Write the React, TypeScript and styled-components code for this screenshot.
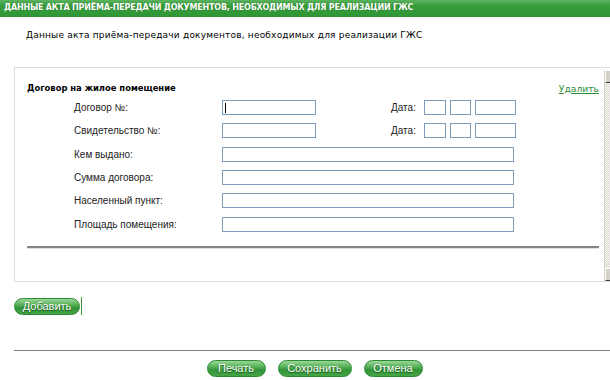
import styled, { createGlobalStyle } from 'styled-components';

const GlobalStyle = createGlobalStyle`
  html, body {
    margin: 0;
    padding: 0;
    background: #ffffff;
    overflow: hidden;
  }
`;

type Field = { label: string; dated?: boolean };

const fields: Field[] = [
  { label: 'Договор №:', dated: true },
  { label: 'Свидетельство №:', dated: true },
  { label: 'Кем выдано:' },
  { label: 'Сумма договора:' },
  { label: 'Населенный пункт:' },
  { label: 'Площадь помещения:' },
];

export const App = () => {
  return (
    <Page>
      <GlobalStyle />
      <TitleBar>Данные акта приёма-передачи документов, необходимых для реализации ГЖС</TitleBar>
      <Subtitle>Данные акта приёма-передачи документов, необходимых для реализации ГЖС</Subtitle>

      <Panel>
        <PanelBody>
          <PanelHead>
            <Heading>Договор на жилое помещение</Heading>
            <DeleteLink href="#">Удалить</DeleteLink>
          </PanelHead>
          <Rows>
            {fields.map((f, i) => (
              <Row key={f.label}>
                <Label>{f.label}</Label>
                {f.dated ? (
                  <DateLine>
                    <TextInput $width={94} $focused={i === 0} />
                    <DateLabel>Дата:</DateLabel>
                    <TextInput $width={22} />
                    <TextInput $width={21} />
                    <TextInput $width={41} />
                  </DateLine>
                ) : (
                  <TextInput $width={292} />
                )}
              </Row>
            ))}
          </Rows>
          <Separator />
        </PanelBody>
        <ScrollTrack>
          <ScrollButton />
          <ScrollFill />
          <ScrollButton />
        </ScrollTrack>
      </Panel>

      <AddRow>
        <GreenButton $width={66}>Добавить</GreenButton>
        <Caret />
      </AddRow>

      <Footer>
        <GreenButton $width={59}>Печать</GreenButton>
        <GreenButton $width={74}>Сохранить</GreenButton>
        <GreenButton $width={59}>Отмена</GreenButton>
      </Footer>
    </Page>
  );
};

const Page = styled.div`
  width: 610px;
  height: 380px;
  overflow: hidden;
  font-family: 'Liberation Sans', Arial, sans-serif;
  color: #000;
`;

const TitleBar = styled.div`
  height: 17px;
  line-height: 16px;
  padding-left: 4px;
  background: linear-gradient(to bottom, #5cb35f 0%, #369c3b 35%, #2f9636 100%);
  color: #ffffff;
  font-family: 'DejaVu Sans', Verdana, sans-serif;
  font-weight: bold;
  font-size: 8px;
  letter-spacing: -0.2px;
  text-transform: uppercase;
  white-space: nowrap;
  text-shadow: 0 0 1px rgba(0, 60, 0, 0.5);
`;

const Subtitle = styled.div`
  padding: 12px 0 0 26px;
  height: 24px;
  line-height: 12px;
  font-family: 'DejaVu Sans', Verdana, sans-serif;
  font-size: 9px;
  letter-spacing: 0.2px;
  white-space: nowrap;
`;

const Panel = styled.div`
  margin: 14px -20px 0 14px;
  height: 213px;
  border: 1px solid #dcdcdc;
  display: flex;
`;

const PanelBody = styled.div`
  width: 572px;
  padding: 12px 5px 0 12px;
`;

const PanelHead = styled.div`
  display: flex;
  justify-content: space-between;
  align-items: center;
  height: 16px;
`;

const Heading = styled.div`
  font-family: 'DejaVu Sans', Tahoma, sans-serif;
  font-weight: bold;
  font-size: 8.4px;
`;

const DeleteLink = styled.a`
  color: #2e8b3a;
  font-family: 'DejaVu Sans', Verdana, sans-serif;
  font-size: 9.2px;
  text-decoration: underline;
`;

const Rows = styled.div`
  display: grid;
  grid-auto-rows: 23.3px;
  padding: 0 0 0 47px;
`;

const Row = styled.div`
  display: flex;
  align-items: center;
`;

const Label = styled.div`
  width: 148px;
  font-size: 10px;
  color: #222;
`;

const DateLine = styled.div`
  display: flex;
  align-items: center;
  gap: 4px;
`;

const DateLabel = styled.span`
  margin-left: 71px;
  width: 29px;
  font-size: 10px;
  color: #222;
`;

const TextInput = styled.div<{ $width: number; $focused?: boolean }>`
  box-sizing: border-box;
  width: ${(p) => p.$width}px;
  height: 15px;
  border: 1px solid #7b9cba;
  background: #fff;
  position: relative;

  ${(p) =>
    p.$focused &&
    `
    &::after {
      content: '';
      position: absolute;
      left: 2px;
      top: 2px;
      width: 1px;
      height: 10px;
      background: #000;
    }
  `}
`;

const Separator = styled.div`
  margin-top: 10px;
  width: 572px;
  height: 2px;
  background: #858585;
  border-bottom: 1px solid #e2e0dc;
`;

const ScrollTrack = styled.div`
  margin-top: 2px;
  width: 14px;
  display: flex;
  flex-direction: column;
  border-left: 1px solid #d4d0c8;
`;

const ScrollButton = styled.div`
  height: 13px;
  background: #d4d0c8;
  border: 1px solid #ffffff;
  border-right-color: #404040;
  border-bottom-color: #404040;
  box-sizing: border-box;
`;

const ScrollFill = styled.div`
  flex: 1;
  background-color: #ffffff;
  background-image: repeating-conic-gradient(#d4d0c8 0% 25%, #ffffff 0% 50%);
  background-size: 2px 2px;
`;

const AddRow = styled.div`
  display: flex;
  align-items: center;
  padding: 15px 0 0 14px;
  height: 18px;
`;

const GreenButton = styled.button<{ $width: number }>`
  box-sizing: border-box;
  width: ${(p) => p.$width}px;
  height: 17px;
  padding: 0;
  border: 1px solid #2d8a32;
  border-radius: 9px;
  background: linear-gradient(to bottom, #9ad89a 0%, #55b055 40%, #33923a 60%, #45a545 100%);
  color: #ffffff;
  font-family: 'Liberation Sans', Arial, sans-serif;
  font-size: 11px;
  line-height: 15px;
  text-shadow: 0 1px 1px rgba(0, 50, 0, 0.7);
  cursor: pointer;
`;

const Caret = styled.div`
  width: 1px;
  height: 18px;
  margin-left: 1px;
  background: #3a9a3a;
`;

const Footer = styled.div`
  margin: 35px 0 0 14px;
  width: 601px;
  border-top: 1px solid #808080;
  padding-top: 9px;
  display: flex;
  justify-content: center;
  gap: 12px;
`;

export default App;
